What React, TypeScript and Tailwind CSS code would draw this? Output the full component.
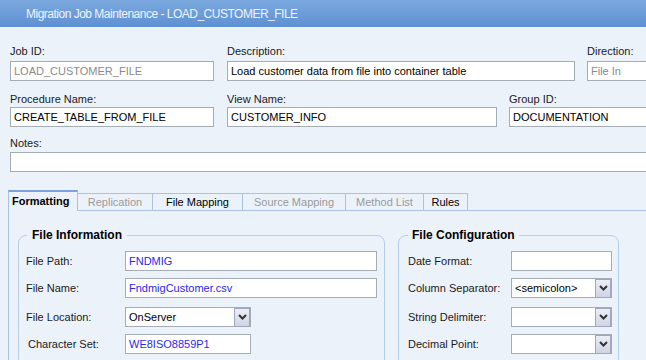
import React from 'react';

const Field: React.FC<{
  label: string;
  value?: string;
  width: string;
  tone?: 'dark' | 'muted';
  gap?: string;
}> = ({ label, value = '', width, tone = 'dark', gap = 'mt-[3px]' }) => (
  <div className={`flex flex-col shrink-0 ${width}`}>
    <label className="h-[14px] leading-[14px] text-[11px] text-[#1a1a1a]">{label}</label>
    <div
      className={`${gap} h-[20px] bg-white border border-[#a4acb6] px-[3px] flex items-center text-[11px] whitespace-nowrap overflow-hidden ${
        tone === 'muted' ? 'text-[#8a8a8a]' : 'text-black'
      }`}
    >
      {value}
    </div>
  </div>
);

const Chevron: React.FC = () => (
  <div className="w-[16px] h-[19px] border border-[#9ea7bf] bg-gradient-to-b from-[#eceef6] to-[#cfd3e4] flex items-center justify-center">
    <svg width="9" height="6" viewBox="0 0 9 6">
      <path d="M1 1l3.5 3.5L8 1" fill="none" stroke="#333" strokeWidth="2" />
    </svg>
  </div>
);

const Select: React.FC<{ value?: string; width: string }> = ({ value = '', width }) => (
  <div className={`${width} shrink-0 h-[20px] bg-white border border-[#a4acb6] flex items-center justify-between pl-[3px] text-[11px] text-black`}>
    <span>{value}</span>
    <Chevron />
  </div>
);

const Input: React.FC<{ value?: string; width: string; blue?: boolean }> = ({ value = '', width, blue }) => (
  <div
    className={`${width} shrink-0 h-[20px] bg-white border border-[#a4acb6] px-[3px] flex items-center text-[11px] ${
      blue ? 'text-[#2a2ae6]' : 'text-black'
    }`}
  >
    {value}
  </div>
);

const Row: React.FC<{ label: string; labelWidth: string; labelClass?: string; children: React.ReactNode; className?: string }> = ({
  label,
  labelWidth,
  labelClass = '',
  children,
  className = '',
}) => (
  <div className={`flex items-center ${className}`}>
    <span className={`${labelWidth} shrink-0 text-[11px] text-[#1a1a1a] ${labelClass}`}>{label}</span>
    {children}
  </div>
);

const tabs = [
  { name: 'Formatting', w: 'w-[70px]', state: 'active' },
  { name: 'Replication', w: 'w-[75px]', state: 'disabled' },
  { name: 'File Mapping', w: 'w-[90px]', state: 'enabled' },
  { name: 'Source Mapping', w: 'w-[103px]', state: 'disabled' },
  { name: 'Method List', w: 'w-[78px]', state: 'disabled' },
  { name: 'Rules', w: 'w-[44px]', state: 'enabled' },
];

const App: React.FC = () => {
  return (
    <div className="w-[646px] h-[360px] overflow-hidden bg-[#ecf2fa] font-['Liberation_Sans',Arial,sans-serif]">
      {/* title bar */}
      <div className="h-[27px] pl-[26px] flex items-center bg-gradient-to-b from-[#7ba8de] to-[#5e90d3] text-[12px] tracking-[-0.5px] text-[#eef4ff]">
        Migration Job Maintenance - LOAD_CUSTOMER_FILE
      </div>

      {/* header form */}
      <div className="pl-[10px]">
        <div className="flex gap-[13px] mt-[17px]">
          <Field label="Job ID:" value="LOAD_CUSTOMER_FILE" width="w-[204px]" tone="muted" />
          <Field label="Description:" value="Load customer data from file into container table" width="w-[348px]" />
          <div className="ml-[-1px] shrink-0">
            <Field label="Direction:" value="File In" width="w-[80px]" tone="muted" />
          </div>
        </div>

        <div className="flex gap-[13px] mt-[11px]">
          <Field label="Procedure Name:" value="CREATE_TABLE_FROM_FILE" width="w-[204px]" gap="mt-[1px]" />
          <Field label="View Name:" value="CUSTOMER_INFO" width="w-[270px]" gap="mt-[1px]" />
          <div className="ml-[-1px] shrink-0">
            <Field label="Group ID:" value="DOCUMENTATION" width="w-[140px]" gap="mt-[1px]" />
          </div>
        </div>

        <div className="mt-[9px]">
          <Field label="Notes:" width="w-[650px]" gap="mt-[2px]" />
        </div>
      </div>

      {/* tabs */}
      <div className="mt-[19px] ml-[8px] flex items-end h-[20px] border-b border-[#a9c3e4]">
        {tabs.map((t) =>
          t.state === 'active' ? (
            <div
              key={t.name}
              className={`${t.w} h-[21px] mb-[-1px] bg-[#ecf2fa] border-x border-[#a9c3e4] border-t-2 border-t-[#7aa3dc] pl-[3px] flex items-center text-[11px] font-bold text-black`}
            >
              {t.name}
            </div>
          ) : (
            <div
              key={t.name}
              className={`${t.w} h-[17px] border-r border-t border-[#a9c3e4] flex items-center justify-center text-[11px] ${
                t.state === 'disabled' ? 'text-[#9a9a9a]' : 'text-black'
              }`}
            >
              {t.name}
            </div>
          )
        )}
      </div>

      {/* tab panel */}
      <div className="ml-[8px] h-[200px] border-l border-[#a9c3e4] pl-[9px] pt-[17px] flex">
        <fieldset className="w-[365px] h-[140px] border border-[#b5cde9] rounded-[8px] px-[7px] pt-[9px]">
          <legend className="ml-[1px] px-[5px] text-[12px] font-bold text-black leading-[14px]">File Information</legend>
          <Row label="File Path:" labelWidth="w-[99px]">
            <Input value="FNDMIG" width="w-[252px]" blue />
          </Row>
          <Row label="File Name:" labelWidth="w-[99px]" className="mt-[7px]">
            <Input value="FndmigCustomer.csv" width="w-[252px]" blue />
          </Row>
          <Row label="File Location:" labelWidth="w-[99px]" className="mt-[9px]">
            <Select value="OnServer" width="w-[126px]" />
          </Row>
          <Row label="Character Set:" labelWidth="w-[99px]" labelClass="pl-[2px]" className="mt-[7px]">
            <Input value="WE8ISO8859P1" width="w-[126px]" blue />
          </Row>
        </fieldset>

        <fieldset className="ml-[13px] w-[221px] h-[140px] border border-[#b5cde9] rounded-[8px] pl-[9px] pt-[9px]">
          <legend className="px-[4px] text-[12px] font-bold text-black leading-[14px]">File Configuration</legend>
          <Row label="Date Format:" labelWidth="w-[103px]">
            <Input width="w-[101px]" />
          </Row>
          <Row label="Column Separator:" labelWidth="w-[103px]" className="mt-[7px]">
            <Select value="<semicolon>" width="w-[101px]" />
          </Row>
          <Row label="String Delimiter:" labelWidth="w-[103px]" className="mt-[9px]">
            <Select width="w-[101px]" />
          </Row>
          <Row label="Decimal Point:" labelWidth="w-[103px]" className="mt-[7px]">
            <Select width="w-[101px]" />
          </Row>
        </fieldset>
      </div>
    </div>
  );
};

export default App;
